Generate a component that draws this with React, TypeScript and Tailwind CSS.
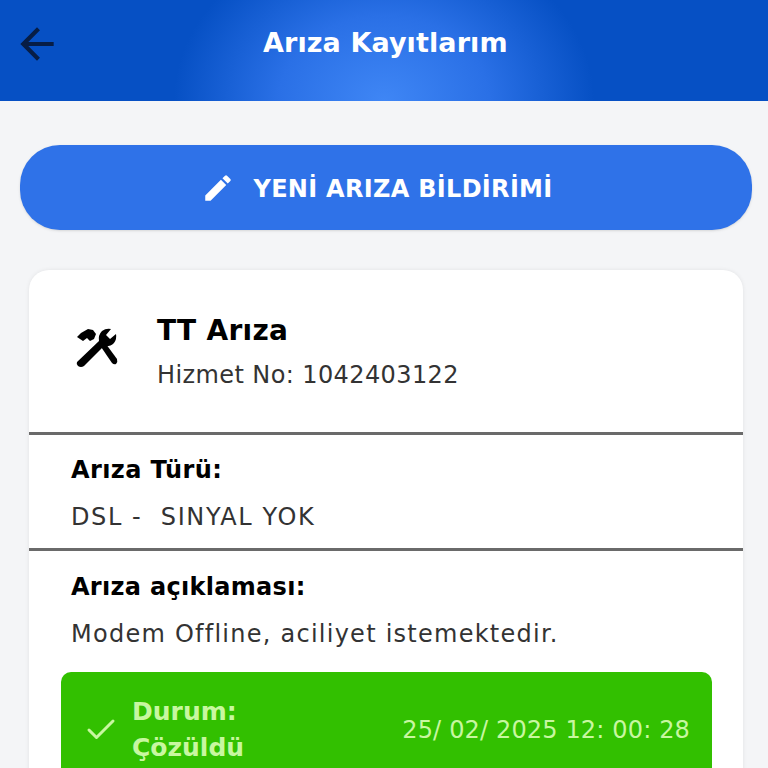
import { MdArrowBack, MdEdit } from "react-icons/md";
import { Check } from "lucide-react";

// hammer and wrench, crossed
function ToolsIcon() {
  return (
    <svg viewBox="0 0 44 42" className="mb-[8px] h-[42px] w-[44px] text-black" fill="currentColor">
      <path d="M6 6 L13 2 L18 3 L21 7 L19 12 L15 14 L12 11 L8 14 L2 10 Z" />
      <path d="M24 17 L28 13 L42 32 Q43 35 41 37 Q39 38 37 36 Z" />
      <path d="M2 35 L24 14 Q23 8 27 4 Q31 1 36 2 L31 8 L35 12 L41 7 Q42 12 39 16 Q35 20 29 19 L9 39 Q6 41 3 39 Q1 37 2 35 Z" />
    </svg>
  );
}

export default function App() {
  return (
    <div className="h-[768px] w-[768px] overflow-hidden bg-[#f4f5f7] font-['DejaVu_Sans','Liberation_Sans',sans-serif]">
      <header className="flex h-[101px] items-center bg-[radial-gradient(ellipse_210px_170px_at_50%_100%,#3f86f5_0%,#2a70e6_50%,#0650c4_100%)] pb-[14px] pl-3">
        <MdArrowBack className="h-[50px] w-[50px] text-[#071d45]" />
        <h1 className="ml-[201px] text-[27px] font-bold tracking-[0.1px] text-white">Arıza Kayıtlarım</h1>
      </header>

      <main className="pl-5 pr-4 pt-11">
        <button className="flex h-[85px] w-full items-center justify-center gap-[18px] rounded-[40px] bg-[#2f72e8] pr-[18px] shadow-sm">
          <MdEdit className="h-[34px] w-[34px] text-white" />
          <span className="pt-[2px] text-[24px] font-bold tracking-[0.3px] text-white">YENİ ARIZA BİLDİRİMİ</span>
        </button>

        <section className="mx-[9px] mt-10 rounded-t-[20px] bg-white shadow-[0_0_4px_rgba(0,0,0,0.08)]">
          <div className="flex h-[165px] items-center border-b-[3px] border-[#6a6a6a] pl-[46px] pt-[2px]">
            <ToolsIcon />
            <div className="ml-[38px]">
              <div className="text-[28px] font-bold leading-[36px] tracking-[0.3px] text-black">TT Arıza</div>
              <div className="mt-[10px] text-[24px] leading-[32px] tracking-[0.4px] text-[#333]">Hizmet No: 1042403122</div>
            </div>
          </div>

          <div className="h-[116px] border-b-[3px] border-[#6a6a6a] px-[42px] pt-[19px]">
            <div className="text-[24px] font-bold leading-[32px] tracking-[0.4px] text-black">Arıza Türü:</div>
            <div className="mt-[15px] text-[24px] leading-[32px] tracking-[1.6px] text-[#333]">DSL -&nbsp; SINYAL YOK</div>
          </div>

          <div className="pl-[32px] pr-[31px] pt-[20px]">
            <div className="pl-[10px] text-[24px] font-bold leading-[32px] tracking-[0.3px] text-black">Arıza açıklaması:</div>
            <div className="mt-[15px] pl-[10px] text-[24px] leading-[32px] tracking-[1.25px] text-[#333]">Modem Offline, aciliyet istemektedir.</div>
            <div className="mt-[22px] flex h-[120px] items-center rounded-[10px] bg-[#32c000] pb-[4px] pl-[22px] pr-[22px] text-[#c8f7a0]">
              <Check className="h-9 w-9" strokeWidth={2} />
              <div className="ml-[13px] text-[25px] font-bold leading-[36px]">
                <div>Durum:</div>
                <div>Çözüldü</div>
              </div>
              <div className="ml-auto text-[24px] tracking-[0.15px]">25/ 02/ 2025 12: 00: 28</div>
            </div>
          </div>
        </section>
      </main>
    </div>
  );
}
